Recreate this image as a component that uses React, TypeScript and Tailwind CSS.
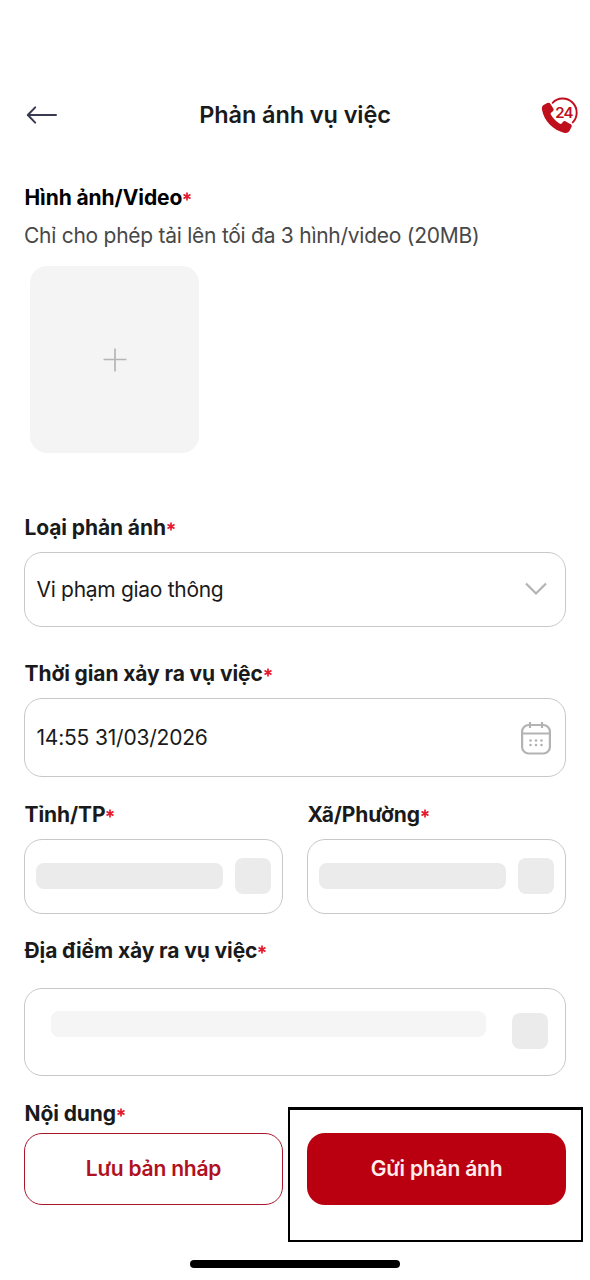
import React, { ReactNode } from "react";

interface LabelProps {
  children: ReactNode;
  className?: string;
}

function Label({ children, className = "" }: LabelProps) {
  return (
    <div
      className={`flex h-[26px] items-center whitespace-nowrap pt-[2px] pl-[0.5px] text-[21px] leading-[26px] font-bold tracking-[-0.1px] ${className}`}
    >
      <span>{children}</span>
      <Required />
    </div>
  );
}

function Required() {
  return (
    <svg className="mb-[3px] ml-px h-[9px] w-[8px]" viewBox="0 0 8 9" fill="none" stroke="#e5192d" strokeWidth="1.7">
      <path d="M4 .5v8M.5 2.5l7 4M7.5 2.5l-7 4" />
    </svg>
  );
}

function BackArrow() {
  return (
    <svg className="h-[20px] w-[32px]" viewBox="0 0 32 20" fill="none" stroke="#383a50" strokeWidth="2" strokeLinecap="round" strokeLinejoin="round">
      <path d="M30 10H2M9.2 2.4L1.8 10l7.4 7.6" />
    </svg>
  );
}

function Hotline() {
  return (
    <svg className="h-[38px] w-[38px]" viewBox="0 0 38 38">
      <path d="M11.6 5.8A14 14 0 1 1 31.700 25.400" fill="none" stroke="#c00f1c" strokeWidth="1.9" strokeLinecap="round" />
      <path
        d="M2.6 8L6.2 6C7.6 5.3 8.8 5.700 9.500 6.900L12.300 11.400C13 12.600 12.700 13.600 11.600 14.400L10.300 15.400C9.500 16 9.500 16.900 10.100 17.900C12.200 21.400 15 24.400 18.500 26.500C19.500 27.100 20.300 27 20.900 26.200L21.900 25C22.700 24 23.700 23.800 24.800 24.500L29.700 27.300C30.800 28 31.100 29 30.500 30.100L28.700 33.600C27.700 35.500 26 36.400 23.600 35.900C12 33.400 3 23.800 1 12.800C.6 10.400 1.200 8.900 2.600 8Z"
        fill="#c00f1c"
      />
      <text x="23" y="20.500" textAnchor="middle" className="fill-[#c00f1c] text-[15px] font-semibold tracking-[-0.7px]">
        24
      </text>
    </svg>
  );
}

function ChevronIcon() {
  return (
    <svg className="mb-px h-[14px] w-[22px]" viewBox="0 0 22 14" fill="none" stroke="#b3b3b3" strokeWidth="2.200">
      <path d="M1 1.500L11 11.500L21 1.500" />
    </svg>
  );
}

function CalendarIcon() {
  return (
    <svg className="h-[34px] w-[30px]" viewBox="0 0 30 34" fill="none" stroke="#b3b3b3" strokeWidth="2.2">
      <rect x="1.1" y="4" width="27.800" height="28.500" rx="6.500" />
      <path d="M1 12.500h28M9 1v6M21 1v6" />
      <g fill="#b3b3b3" stroke="none">
        <circle cx="9.500" cy="19.500" r="1.300" />
        <circle cx="15" cy="19.500" r="1.300" />
        <circle cx="20.500" cy="19.500" r="1.300" />
        <circle cx="9.500" cy="24" r="1.300" />
        <circle cx="15" cy="24" r="1.300" />
        <circle cx="20.500" cy="24" r="1.300" />
      </g>
    </svg>
  );
}

function SkeletonField() {
  return (
    <div className="mt-[12px] flex h-[75px] items-center justify-between rounded-[18px] border-[1.5px] border-[#c8c8c8] px-[11px] pb-px">
      <div className="h-[26px] w-[187px] rounded-lg bg-[#ebebeb]" />
      <div className="size-[36px] rounded-lg bg-[#ebebeb]" />
    </div>
  );
}

export default function App() {
  return (
    <div className="relative h-[1280px] w-[590px] overflow-hidden bg-white font-[Inter,sans-serif] text-[#1a1a1a]">
      <header className="grid h-[150px] grid-cols-[1fr_auto_1fr] items-end px-[11px] pb-[15px]">
        <button className="mb-[10px] ml-[15px] justify-self-start">
          <BackArrow />
        </button>
        <h1 className="mb-[5px] text-[23.5px] leading-[30px] font-semibold tracking-[-0.1px]">Phản ánh vụ việc</h1>
        <button className="justify-self-end">
          <Hotline />
        </button>
      </header>

      <main className="px-6 pt-[34px]">
        <Label className="text-black">Hình ảnh/Video</Label>
        <p className="mt-[13px] text-[21px] leading-[26px] tracking-[-0.26px] whitespace-nowrap text-[#484848]">
          Chỉ cho phép tải lên tối đa 3 hình/video (20MB)
        </p>
        <button className="mt-[17px] ml-[6px] flex h-[187px] w-[169px] items-center justify-center rounded-[17px] bg-[#f4f4f4]">
          <svg className="size-6" viewBox="0 0 24 24" stroke="#b5b5b5" strokeWidth="1.700">
            <path d="M12 .5v23M.5 11.500h23" />
          </svg>
        </button>

        <Label className="mt-[61px]">Loại phản ánh</Label>
        <div className="mt-[12px] flex h-[75px] w-[542px] items-center justify-between rounded-[18px] border-[1.5px] border-[#c8c8c8] pr-[18px] pl-[11.5px] text-[21px] tracking-[-0.3px]">
          <span>Vi phạm giao thông</span>
          <ChevronIcon />
        </div>

        <Label className="mt-[33px]">Thời gian xảy ra vụ việc</Label>
        <div className="mt-[12px] flex h-[79px] w-[542px] items-center justify-between rounded-[18px] border-[1.5px] border-[#c8c8c8] pr-[14px] pl-[11.5px] text-[21px] tracking-[-0.2px]">
          <span>14:55 31/03/2026</span>
          <CalendarIcon />
        </div>

        <div className="mt-[24px] grid w-[542px] grid-cols-2 gap-6">
          <div>
            <Label>Tỉnh/TP</Label>
            <SkeletonField />
          </div>
          <div>
            <Label>Xã/Phường</Label>
            <SkeletonField />
          </div>
        </div>

        <Label className="mt-[23px]">Địa điểm xảy ra vụ việc</Label>
        <div className="mt-[25px] flex h-[88px] w-[542px] items-start justify-between rounded-[18px] border-[1.5px] border-[#c8c8c8] pt-[22px] pr-[17px] pl-[26px]">
          <div className="h-[26px] w-[435px] rounded-lg bg-[#f5f5f5]" />
          <div className="mt-[2px] size-[36px] rounded-lg bg-[#ebebeb]" />
        </div>

        <Label className="mt-[24px]">Nội dung</Label>
        <div className="mt-[7px] grid w-[542px] grid-cols-2 gap-6 text-[21px] font-semibold tracking-[-0.2px]">
          <button className="h-[72px] rounded-[18px] border-[1.5px] border-[#a9162a] text-[#b01020]">
            Lưu bản nháp
          </button>
          <button className="h-[72px] rounded-[18px] bg-[#ba0010] text-[#ffeceb]">Gửi phản ánh</button>
        </div>
      </main>

      <div className="mx-auto mt-[55px] h-[8px] w-[210px] rounded-full bg-black" />

      {/* Highlight around the submit button */}
      <div className="pointer-events-none absolute top-[1107px] left-[288px] h-[135px] w-[294.5px] border-2 border-t-[3px] border-black" />
    </div>
  );
}
